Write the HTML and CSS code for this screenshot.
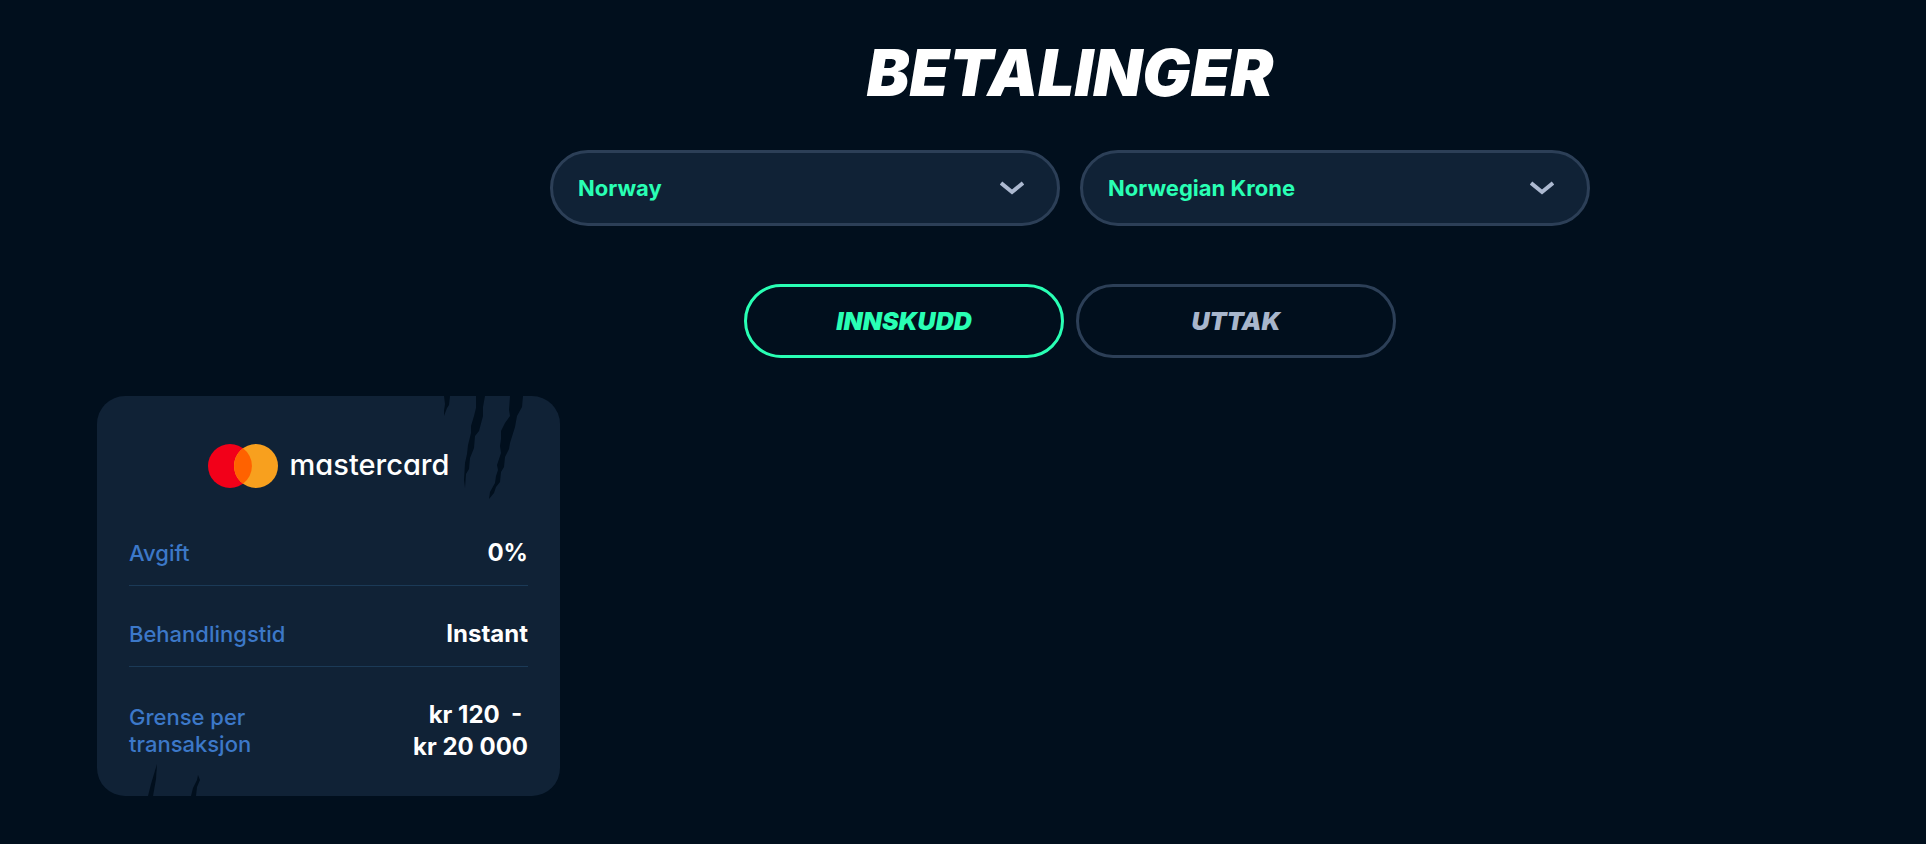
FILE: index.html
```
<!DOCTYPE html>
<html lang="no">
<head>
    <meta charset="UTF-8">
    <meta name="viewport" content="width=device-width, initial-scale=1.0">
    <title>Betalinger</title>
    <link rel="stylesheet" href="styles.css">
</head>
<body>

<main class="payments">
    <div class="payments-head">
        <h1>Betalinger</h1>

        <!-- Land og valuta -->
        <form class="filters">
            <div class="select-box">
                <select name="country" aria-label="Land">
                    <option selected>Norway</option>
                    <option>Finland</option>
                </select>
                <svg class="chevron" viewBox="0 0 24 14" aria-hidden="true"><path d="M1 2l11 9L23 2"/></svg>
            </div>
            <div class="select-box">
                <select name="currency" aria-label="Valuta">
                    <option selected>Norwegian Krone</option>
                    <option>Euro</option>
                </select>
                <svg class="chevron" viewBox="0 0 24 14" aria-hidden="true"><path d="M1 2l11 9L23 2"/></svg>
            </div>
        </form>

        <div class="tabs">
            <button type="button" class="tab active">Innskudd</button>
            <button type="button" class="tab">Uttak</button>
        </div>
    </div>

    <!-- Betalingsmetoder -->
    <div class="methods">
        <article class="method-card">
            <svg class="scratch scratch-top" viewBox="0 0 80 104" aria-hidden="true">
                <path d="M1 0h6L6 9 4 12 1 20 1 15 2 8z"/>
                <path d="M33 0h9l-2 11v9l-4 15-4 5-1 12-4 10-1 11-3 5-1 14-1-8 1-17 2-9 1-9 3-12v-7l3-10 2-8z"/>
                <path d="M67 0h13l-1 11-5 9-2 11-5 16-1 6-4 8-1 10-3 5-1 10-4 5-2 6-5 6 1-7 5-9 1-7 2-6-1-5 4-12-1-7 1-7v-8l4-8 5-7-1-6z"/>
            </svg>
            <svg class="scratch scratch-bottom" viewBox="0 0 54 32" aria-hidden="true">
                <path d="M9 0l-1 15-3 17H0l3-12z"/>
                <path d="M50 11l2 5-3 7-1 9h-5l2-8 4-8z"/>
            </svg>

            <div class="brand">
                <svg class="brand-mark" viewBox="0 0 70 44" aria-hidden="true">
                    <circle cx="22" cy="22" r="22" fill="#f20019"/>
                    <circle cx="48" cy="22" r="22" fill="#f8a01e"/>
                    <path d="M35 4.300a22 22 0 0 1 0 35.400a22 22 0 0 1 0-35.400z" fill="#ff6200"/>
                </svg>
                <span class="brand-name">mastercard</span>
            </div>

            <dl class="details">
                <div class="row">
                    <dt>Avgift</dt>
                    <dd>0%</dd>
                </div>
                <div class="row">
                    <dt>Behandlingstid</dt>
                    <dd>Instant</dd>
                </div>
                <div class="row">
                    <dt>Grense per transaksjon</dt>
                    <dd>kr 120 &nbsp;-&nbsp;<br>kr 20 000</dd>
                </div>
            </dl>
        </article>
    </div>
</main>

<script>
    // Bytter mellom innskudd og uttak
    const tabs = document.querySelectorAll('.tab');

    tabs.forEach(tab => {
        tab.addEventListener('click', () => {
            tabs.forEach(t => t.classList.remove('active'));
            tab.classList.add('active');
        });
    });
</script>

</body>
</html>
```
FILE: styles.css
```
* {
    box-sizing: border-box;
}
body {
    margin: 0;
    background-color: #010f1d;
    color: white;
    font-family: Inter, Arial, sans-serif;
}
.payments {
    padding: 33px 0 48px 97px;
}
.payments-head {
    padding-left: 117px;
}
h1 {
    margin: 0;
    font-size: 64px;
    line-height: 80px;
    font-weight: 900;
    font-style: italic;
    text-align: center;
    text-transform: uppercase;
}
.filters {
    display: flex;
    justify-content: center;
    gap: 20px;
    max-width: 1040px;
    margin: 37px auto 0;
}
.select-box {
    position: relative;
    flex: 1;
}
.select-box select {
    appearance: none;
    display: block;
    width: 100%;
    height: 76px;
    padding: 0 80px 0 25px;
    border: 3px solid #2c3f57;
    border-radius: 38px;
    background-color: #102236;
    color: #29ffb4;
    font-family: inherit;
    font-size: 22px;
    font-weight: 700;
    cursor: pointer;
}
.chevron {
    position: absolute;
    top: 31px;
    right: 36px;
    width: 24px;
    height: 14px;
    fill: none;
    stroke: #acb9d0;
    stroke-width: 4;
    pointer-events: none;
}
.tabs {
    display: flex;
    justify-content: center;
    gap: 12px;
    margin-top: 58px;
}
.tab {
    width: 320px;
    height: 74px;
    border: 3px solid #2c3f57;
    border-radius: 37px;
    background: none;
    color: #a8b6cc;
    font-family: inherit;
    font-size: 25px;
    font-weight: 900;
    font-style: italic;
    text-transform: uppercase;
    cursor: pointer;
}
.tab.active {
    border-color: #29ffb4;
    color: #29ffb4;
}
.methods {
    display: flex;
    flex-wrap: wrap;
    gap: 24px;
    margin-top: 38px;
}
.method-card {
    position: relative;
    width: 463px;
    padding: 48px 32px 33px;
    border-radius: 28px;
    background-color: #102236;
    overflow: hidden;
}
.scratch {
    position: absolute;
    fill: #010f1d;
}
.scratch-top {
    top: 0;
    right: 37px;
    width: 80px;
    height: 104px;
}
.scratch-bottom {
    bottom: 0;
    left: 51px;
    width: 54px;
    height: 32px;
}
.brand {
    position: relative;
    display: flex;
    justify-content: center;
    align-items: center;
    gap: 12px;
    height: 44px;
    margin-bottom: 17px;
}
.brand-mark {
    width: 70px;
    height: 44px;
}
.brand-name {
    padding-bottom: 2px;
    font-size: 29px;
    line-height: 40px;
    font-weight: 500;
    /* enkel a, som i logoen */
    font-feature-settings: "cv11";
}
.details {
    position: relative;
    margin: 0;
}
.row {
    display: flex;
    justify-content: space-between;
    align-items: center;
    padding: 32px 0 16px;
    border-bottom: 1px solid #1b3a57;
}
.row:last-child {
    padding-bottom: 0;
    border-bottom: none;
}
dt {
    max-width: 160px;
    color: #3c78c8;
    font-size: 22px;
    line-height: 27px;
    font-weight: 500;
}
dd {
    margin: 0;
    font-size: 24px;
    line-height: 32px;
    font-weight: 700;
    text-align: right;
}
```
